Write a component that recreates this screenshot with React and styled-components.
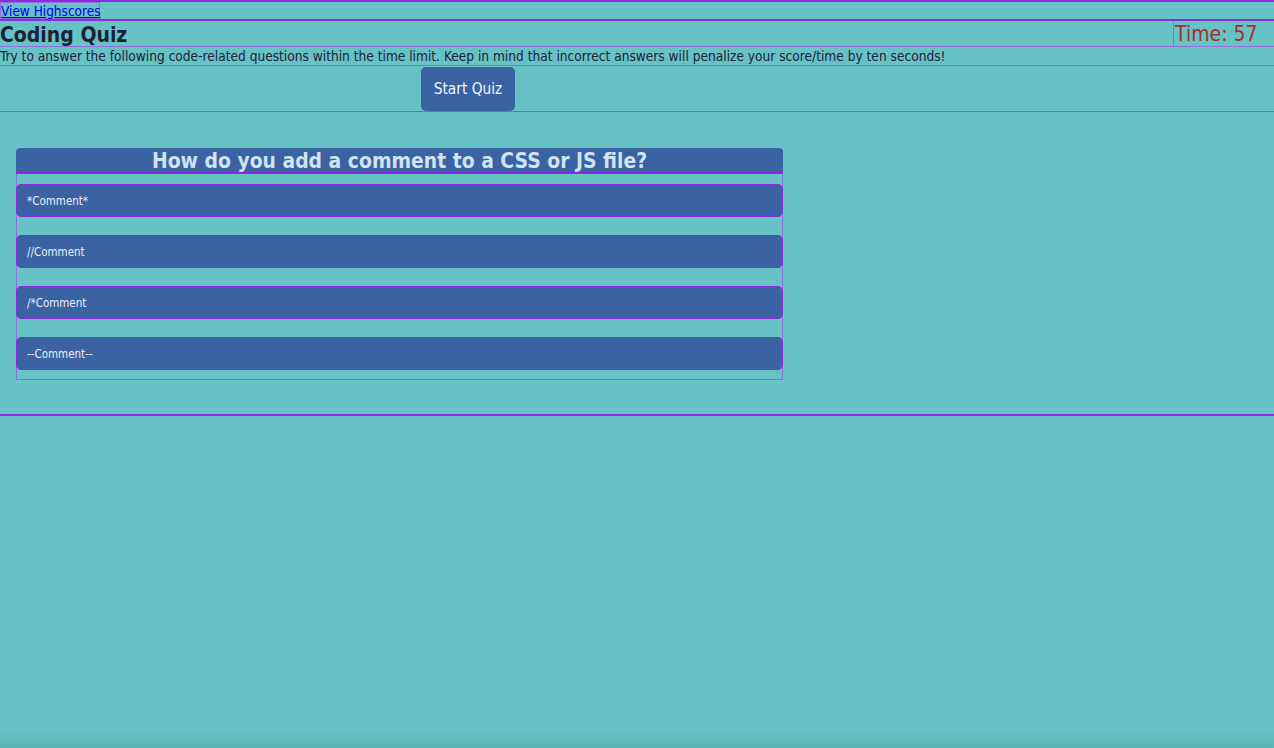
import styled, { createGlobalStyle } from "styled-components";

const QUESTION = {
  title: "How do you add a comment to a CSS or JS file?",
  choices: ["*Comment*", "//Comment", "/*Comment", "--Comment--"],
};

const GlobalStyle = createGlobalStyle`
  html {
    min-height: 100%;
    background: linear-gradient(to bottom, #66c2c4 0, #66c2c4 calc(100% - 16px), #5db3b5 100%);
  }
  body {
    margin: 0;
    min-height: 100vh;
    font-family: "DejaVu Sans Condensed", "DejaVu Sans", sans-serif;
    color: #1d2138;
  }
`;

const App = () => {
  return (
    <>
      <GlobalStyle />
      <TopNav>
        <HighscoreLink href="#">View Highscores</HighscoreLink>
      </TopNav>
      <HeaderRow>
        <Title>Coding Quiz</Title>
        <Timer>Time: 57</Timer>
      </HeaderRow>
      <Intro>
        Try to answer the following code-related questions within the time limit. Keep in mind
        that incorrect answers will penalize your score/time by ten seconds!
      </Intro>
      <StartRow>
        <StartBtn>Start Quiz</StartBtn>
      </StartRow>
      <QuizSection>
        <Card>
          <Question>{QUESTION.title}</Question>
          <ChoiceList>
            {QUESTION.choices.map((choice) => (
              <ChoiceBtn key={choice}>{choice}</ChoiceBtn>
            ))}
          </ChoiceList>
        </Card>
      </QuizSection>
    </>
  );
};

export default App;

const TopNav = styled.nav`
  border-top: 2px solid #8a2be2;
  height: 17px;
  display: flex;
  align-items: flex-start;
`;

const HighscoreLink = styled.a`
  display: inline-block;
  border: 1px solid #9370db;
  height: 17px;
  line-height: 16px;
  font-size: 13.5px;
  color: #0000ee;
  white-space: nowrap;
  box-sizing: border-box;
  width: 100px;
`;

const HeaderRow = styled.header`
  display: flex;
  border-top: 2px solid #8a2be2;
  border-bottom: 1px solid #9370db;
  height: 28px;
  box-sizing: border-box;
`;

const Title = styled.h1`
  flex: 1;
  margin: 0;
  font-size: 21px;
  line-height: 26px;
  font-weight: bold;
  color: #1d2138;
  border-right: 1px solid #9370db;
  padding-top: 1px;
`;

const Timer = styled.div`
  width: 99px;
  font-size: 21px;
  line-height: 26px;
  color: #a62e2a;
  padding-left: 1px;
`;

const Intro = styled.p`
  margin: 0;
  font-size: 13.6px;
  line-height: 17px;
  height: 19px;
  box-sizing: border-box;
  border-bottom: 1px solid #9370db;
  padding-top: 1px;
  white-space: nowrap;
`;

const StartRow = styled.div`
  height: 46px;
  border-bottom: 1px solid #7b5fd6;
  padding-left: 421px;
  padding-top: 1px;
  box-sizing: border-box;
`;

const StartBtn = styled.button`
  width: 94px;
  height: 44px;
  border: none;
  border-radius: 5px;
  background: #3b62a3;
  color: #f2f6fa;
  font-family: inherit;
  font-size: 15.3px;
  padding: 0;
`;

const QuizSection = styled.section`
  padding: 36px 16px 34px;
  border-bottom: 2px solid #8a2be2;
`;

const Card = styled.div`
  width: 767px;
`;

const Question = styled.h2`
  margin: 0;
  height: 26px;
  box-sizing: border-box;
  background: #3b62a3;
  border-radius: 4px 4px 0 0;
  border-bottom: 2px solid #8a2be2;
  color: #cfe4f1;
  font-size: 20.9px;
  line-height: 26px;
  font-weight: bold;
  text-align: center;
`;

const ChoiceList = styled.div`
  display: flex;
  flex-direction: column;
  gap: 18px;
  padding: 10px 0 9px;
  border: 1px solid #8f6fe0;
  border-top: none;
`;

const ChoiceBtn = styled.button`
  height: 33px;
  margin-left: -1px;
  margin-right: -1px;
  border: 1px solid #8a2be2;
  border-radius: 5px;
  background: #3b62a3;
  color: #e8eef5;
  font-family: inherit;
  font-size: 11.5px;
  text-align: left;
  padding: 0 10px;
`;
